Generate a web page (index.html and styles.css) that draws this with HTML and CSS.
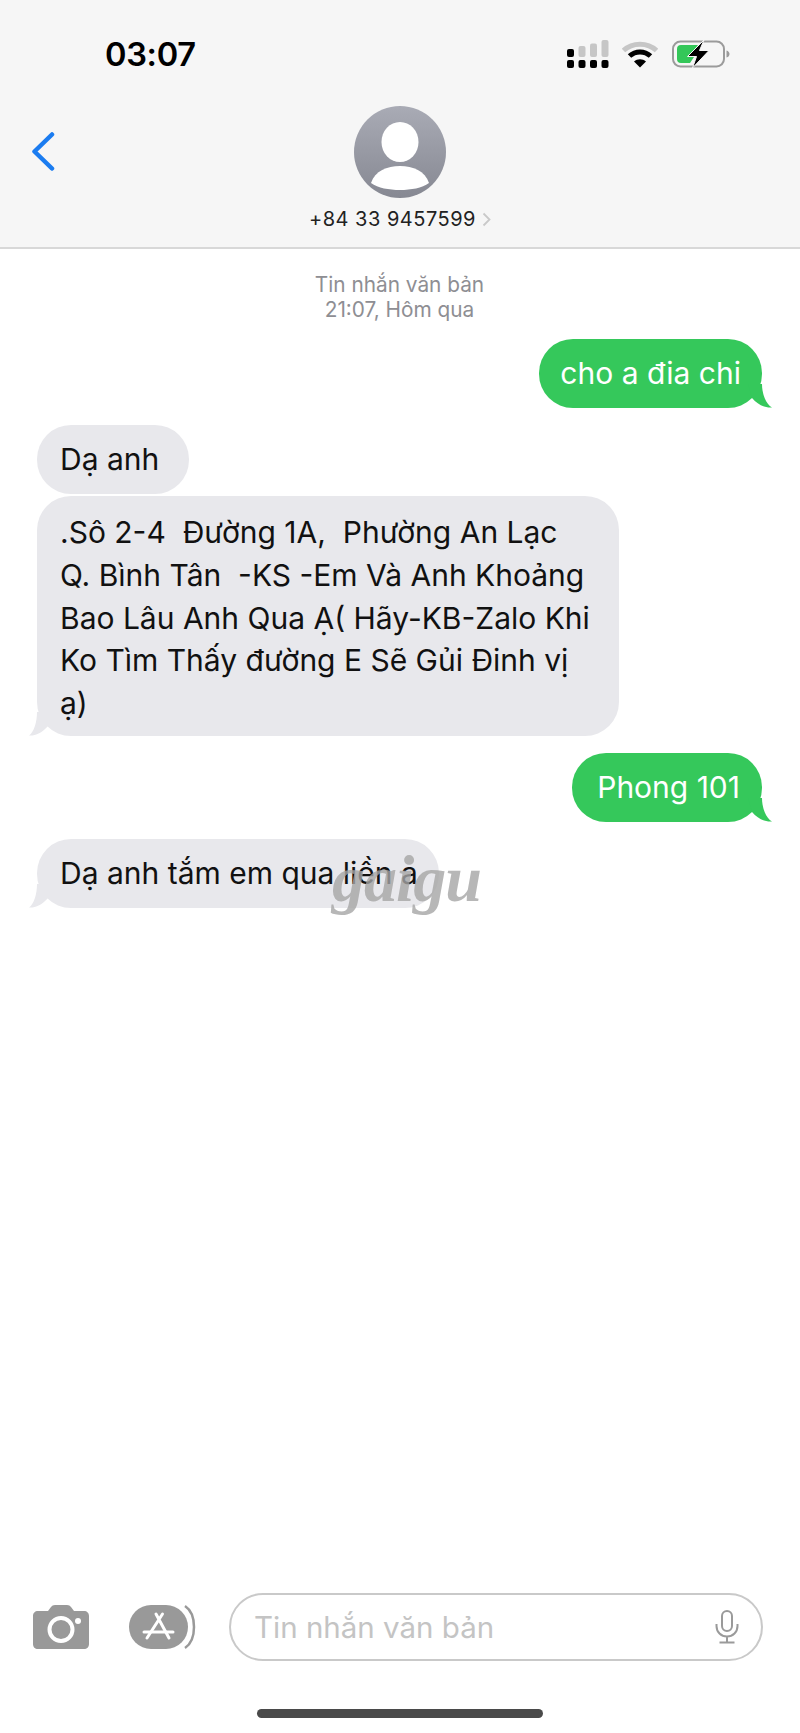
FILE: index.html
```html
<!DOCTYPE html>
<html lang="vi">
<head>
<meta charset="utf-8">
<title>Tin nhắn</title>
<link rel="stylesheet" href="styles.css">
</head>
<body>
<div class="phone">
  <header class="header">
    <div class="status">
      <span class="time">03:07</span>
      <div class="status-icons">
        <svg class="signal" width="42" height="28" viewBox="0 0 42 28">
          <g fill="#c6c6c6">
            <rect x="11.500" y="6" width="7" height="11" rx="2"/>
            <rect x="23" y="3.500" width="7" height="13.500" rx="2"/>
            <rect x="34.500" y="0" width="7" height="17" rx="2"/>
          </g>
          <g fill="#000">
            <rect x="0" y="9" width="7" height="8" rx="2"/>
            <rect x="0" y="20" width="7" height="8" rx="2"/>
            <rect x="11.500" y="20" width="7" height="8" rx="2"/>
            <rect x="23" y="20" width="7" height="8" rx="2"/>
            <rect x="34.500" y="20" width="7" height="8" rx="2"/>
          </g>
        </svg>
        <svg class="wifi" width="36" height="27" viewBox="0 0 36 27">
          <path d="M1.500 9.500C10.500 1 25.500 1 34.500 9.500" fill="none" stroke="#c6c6c6" stroke-width="5"/>
          <path d="M7.500 15C13.500 9.500 22.500 9.500 28.500 15" fill="none" stroke="#000" stroke-width="5"/>
          <path d="M12 20.500L18 26.500L24 20.500C20.500 17.500 15.500 17.500 12 20.500Z" fill="#000"/>
        </svg>
        <svg class="battery" width="58" height="28" viewBox="0 0 58 28">
          <rect x="1" y="1.500" width="51" height="25" rx="7.500" fill="none" stroke="#9b9b9b" stroke-width="2"/>
          <path d="M9 5H26L17 17H22L18 23H9A4 4 0 0 1 5 19V9A4 4 0 0 1 9 5Z" fill="#34c759"/>
          <path d="M54.500 10.500c2 .5 3 2 3 3.500s-1 3-3 3.500Z" fill="#9b9b9b"/>
          <path d="M32 0L15.500 16.500H24.500L20.500 28L37 10.500H27.500Z" fill="#000" stroke="#f6f6f6" stroke-width="1"/>
        </svg>
      </div>
    </div>
    <div class="nav">
      <svg class="back" width="24" height="42" viewBox="0 0 24 42">
        <path d="M21 3.500L3.500 20.500L21 37.500" fill="none" stroke="#1b7cf0" stroke-width="4.500" stroke-linecap="round" stroke-linejoin="round"/>
      </svg>
      <svg class="avatar" width="92" height="92" viewBox="0 0 92 92">
        <defs>
          <linearGradient id="avatarGrad" x1="0" y1="0" x2="0" y2="1">
            <stop offset="0" stop-color="#a9abb5"/>
            <stop offset="1" stop-color="#868892"/>
          </linearGradient>
          <clipPath id="avatarClip"><circle cx="46" cy="46" r="46"/></clipPath>
        </defs>
        <circle cx="46" cy="46" r="46" fill="url(#avatarGrad)"/>
        <ellipse cx="46" cy="36" rx="18.500" ry="20" fill="#fff"/>
        <path d="M17 77C21 65 33 60 46 60S71 65 75 77C68 82 57 84 46 84S24 82 17 77Z" fill="#fff" clip-path="url(#avatarClip)"/>
      </svg>
      <div class="contact">
        <span class="number">+84 33 9457599</span>
        <svg class="chev" width="9" height="15" viewBox="0 0 9 15">
          <path d="M1.500 1.500L7.500 7.500L1.500 13.500" fill="none" stroke="#c9c9c9" stroke-width="1.800"/>
        </svg>
      </div>
    </div>
  </header>

  <main class="thread">
    <div class="stamp">
      <div>Tin nhắn văn bản</div>
      <div>21:07, Hôm qua</div>
    </div>

    <div class="bubble out first">cho a đia chi
      <svg class="tail tail-out" width="24" height="24" viewBox="0 0 24 24"><path d="M10 0C10 10 6 20 0 23.500C7 24 14 21 20 14L24 0Z"/></svg>
    </div>
    <div class="bubble in gap-big short">Dạ anh</div>
    <div class="bubble in gap-small wide">.Sô 2-4&nbsp; Đường 1A,&nbsp; Phường An Lạc<br>Q. Bình Tân&nbsp; -KS -Em Và Anh Khoảng<br>Bao Lâu Anh Qua Ạ( Hãy-KB-Zalo Khi<br>Ko Tìm Thấy đường E Sẽ Gủi Đinh vị<br>ạ)
      <svg class="tail tail-in" width="24" height="24" viewBox="0 0 24 24"><path d="M8 0C8 10 5 20 0 23.500C6 24 13 21 19 14L24 0Z"/></svg>
    </div>
    <div class="bubble out gap-big phong">Phong 101
      <svg class="tail tail-out" width="24" height="24" viewBox="0 0 24 24"><path d="M10 0C10 10 6 20 0 23.500C7 24 14 21 20 14L24 0Z"/></svg>
    </div>
    <div class="bubble in last">Dạ anh tắm em qua liền a
      <svg class="tail tail-in" width="24" height="24" viewBox="0 0 24 24"><path d="M8 0C8 10 5 20 0 23.500C6 24 13 21 19 14L24 0Z"/></svg>
      <span class="watermark">gaigu</span>
    </div>
  </main>

  <footer class="composer">
    <div class="toolbar">
      <svg class="camera" width="56" height="44" viewBox="0 0 56 44">
        <path d="M5 6H15L18 2C19 .8 20 0 22 0H34C36 0 37 .8 38 2L41 6H51C54 6 56 8 56 11V39C56 42 54 44 51 44H5C2 44 0 42 0 39V11C0 8 2 6 5 6Z" fill="#999"/>
        <circle cx="28" cy="24.500" r="11.500" fill="none" stroke="#fff" stroke-width="4"/>
        <circle cx="45" cy="16" r="3" fill="#fff"/>
      </svg>
      <svg class="apps" width="68" height="46" viewBox="0 0 68 46">
        <path d="M56 2C62 6 65 14 65 23S62 40 56 44" fill="none" stroke="#999" stroke-width="2.500"/>
        <rect x="0" y="1" width="59" height="44" rx="22" fill="#999"/>
        <path d="M27 10L40 34M33.500 10L18 34" fill="none" stroke="#fff" stroke-width="3" stroke-linecap="round"/>
        <path d="M15 28H44" fill="none" stroke="#fff" stroke-width="3" stroke-linecap="round"/>
      </svg>
      <div class="field">
        <span class="placeholder">Tin nhắn văn bản</span>
        <svg class="mic" width="24" height="34" viewBox="0 0 24 34">
          <rect x="7" y="1" width="10" height="20" rx="5" fill="none" stroke="#9a9a9a" stroke-width="2"/>
          <path d="M1.500 14V16C1.500 22 6 26.500 12 26.500S22.500 22 22.500 16V14M12 26.500V32.500M4.500 32.500H19.500" fill="none" stroke="#9a9a9a" stroke-width="2"/>
        </svg>
      </div>
    </div>
    <div class="home-bar"></div>
  </footer>
</div>
</body>
</html>
```

FILE: styles.css
```css
* { box-sizing: border-box; }

html, body {
  margin: 0;
  padding: 0;
  background: #fff;
}

.phone {
  width: 800px;
  height: 1733px;
  display: flex;
  flex-direction: column;
  overflow: hidden;
  font-family: Inter, "Liberation Sans", sans-serif;
  color: #111;
}

/* Header */
.header {
  height: 249px;
  flex: none;
  background: #f6f6f6;
  border-bottom: 2px solid #d8d8d8;
  padding-top: 40px;
}

.status {
  height: 28px;
  display: flex;
  align-items: center;
  justify-content: space-between;
  padding: 0 70px 0 105px;
}

.time {
  font-size: 32.600px;
  font-weight: 600;
  line-height: 30px;
  color: #000;
  letter-spacing: -0.3px;
}

.status-icons {
  display: flex;
  align-items: center;
  gap: 14px;
}

.signal { margin-right: -1px; }

.nav {
  position: relative;
  display: flex;
  flex-direction: column;
  align-items: center;
  padding-top: 38px;
}

.back {
  position: absolute;
  left: 31px;
  top: 63px;
}

.contact {
  display: flex;
  align-items: center;
  gap: 6px;
  margin-top: 7px;
}

.number {
  font-size: 20px;
  line-height: 28px;
  letter-spacing: 0.5px;
  color: #222;
}

/* Thread */
.thread {
  flex: 1;
  display: flex;
  flex-direction: column;
  align-items: flex-start;
  padding: 23px 38px 0 37px;
}

.stamp {
  align-self: center;
  text-align: center;
  font-size: 20.800px;
  line-height: 25px;
  color: #8e8e93;
}

.bubble {
  position: relative;
  padding: 13px 22px 13.400px 23px;
  border-radius: 34px;
  font-size: 30px;
  line-height: 42.600px;
  white-space: nowrap;
}

.bubble.in {
  background: #e8e8ec;
  color: #111;
  fill: #e8e8ec;
}

.bubble.out {
  align-self: flex-end;
  background: #35c85b;
  color: #fff;
  fill: #35c85b;
}

.bubble.first {
  margin-top: 17px;
  padding-left: 21px;
  padding-right: 21px;
}

.bubble.phong { padding-left: 25px; }

.gap-big { margin-top: 17.500px; }
.gap-small { margin-top: 2px; }

.short { width: 152px; }

.bubble.wide {
  width: 582px;
  padding-top: 15px;
  padding-bottom: 11.400px;
}

.last {
  width: 402px;
  margin-top: 16.500px;
}

.tail {
  position: absolute;
  bottom: 0;
}

.tail-in { left: -8px; }

.tail-out {
  right: -10px;
  transform: scaleX(-1);
}

.watermark {
  position: absolute;
  left: 295px;
  top: 7px;
  font-family: "Liberation Serif", serif;
  font-size: 66px;
  font-weight: 700;
  font-style: italic;
  line-height: 66px;
  letter-spacing: -1px;
  color: rgba(165, 165, 165, 0.8);
}

/* Composer */
.composer {
  flex: none;
  height: 140px;
  display: flex;
  flex-direction: column;
  align-items: center;
}

.toolbar {
  width: 100%;
  height: 68px;
  display: flex;
  align-items: center;
  padding: 0 37px 0 33px;
}

.camera { margin-right: 40px; }

.apps { margin-right: 32px; }

.field {
  flex: 1;
  height: 68px;
  display: flex;
  align-items: center;
  justify-content: space-between;
  padding: 0 22px 0 23px;
  border: 2px solid #c9c9c9;
  border-radius: 34px;
}

.placeholder {
  font-size: 29.500px;
  color: #c4c4c4;
}

.home-bar {
  width: 286px;
  height: 9px;
  margin-top: 48px;
  border-radius: 5px;
  background: #4a4a4a;
}
```
